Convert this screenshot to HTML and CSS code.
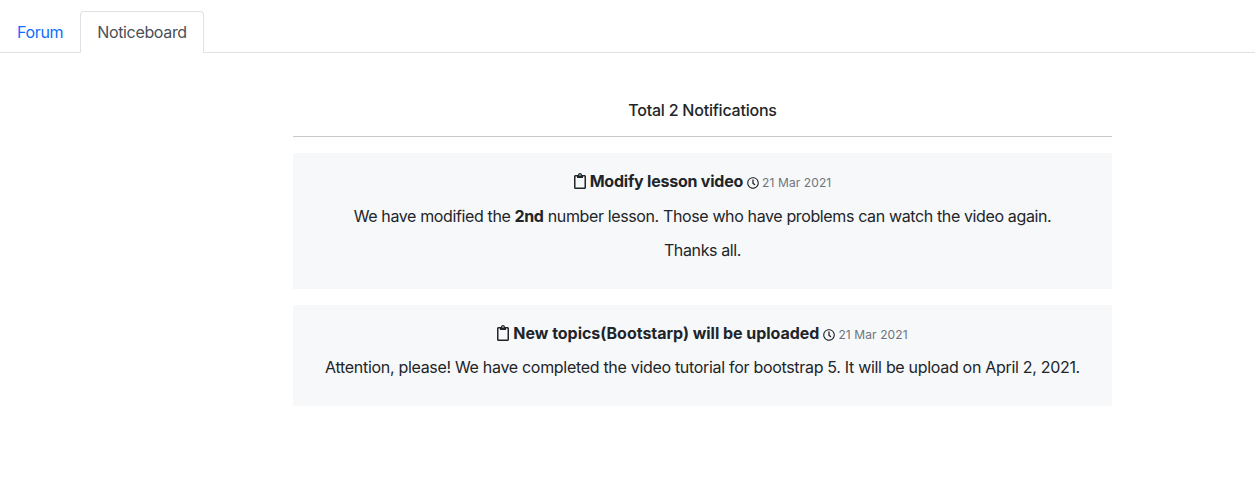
FILE: index.html
```html
<!DOCTYPE html>
<html lang="en">
<head>
<meta charset="utf-8">
<title>Noticeboard</title>
<link rel="stylesheet" href="styles.css">
</head>
<body>
<svg class="sprite" aria-hidden="true">
<symbol id="clipboard" viewBox="0 0 384 512"><path d="M336 64h-80c0-35.300-28.700-64-64-64s-64 28.700-64 64H48C21.500 64 0 85.500 0 112v352c0 26.500 21.500 48 48 48h288c26.500 0 48-21.500 48-48V112c0-26.500-21.500-48-48-48zM192 40c13.300 0 24 10.700 24 24s-10.700 24-24 24-24-10.700-24-24 10.700-24 24-24zm144 418c0 3.300-2.700 6-6 6H54c-3.300 0-6-2.700-6-6V118c0-3.300 2.700-6 6-6h42v36c0 6.600 5.400 12 12 12h168c6.600 0 12-5.400 12-12v-36h42c3.300 0 6 2.700 6 6z"/></symbol>
<symbol id="clock" viewBox="0 0 512 512"><path d="M256 8C119 8 8 119 8 256s111 248 248 248 248-111 248-248S393 8 256 8zm0 448c-110.500 0-200-89.500-200-200S145.500 56 256 56s200 89.500 200 200-89.500 200-200 200zm61.800-104.400l-84.900-61.700c-3.100-2.300-4.900-5.900-4.900-9.700V116c0-6.600 5.400-12 12-12h32c6.600 0 12 5.400 12 12v141.700l66.800 48.600c5.400 3.900 6.500 11.400 2.600 16.800L334.600 349c-3.900 5.300-11.400 6.500-16.800 2.600z"/></symbol>
</svg>
<nav class="tabs">
<a class="tab">Forum</a>
<a class="tab active">Noticeboard</a>
</nav>
<main class="board">
<h1 class="total">Total 2 Notifications</h1>
<article class="notice">
<h2 class="title"><svg class="clipboard"><use href="#clipboard"/></svg><span class="name">Modify lesson video</span><svg class="clock"><use href="#clock"/></svg><time class="date">21 Mar 2021</time></h2>
<p class="text">We have modified the <b>2nd</b> number lesson. Those who have problems can watch the video again.</p>
<p class="text">Thanks all.</p>
</article>
<article class="notice upcoming">
<h2 class="title"><svg class="clipboard"><use href="#clipboard"/></svg><span class="name">New topics(Bootstarp) will be uploaded</span><svg class="clock"><use href="#clock"/></svg><time class="date">21 Mar 2021</time></h2>
<p class="text">Attention, please! We have completed the video tutorial for bootstrap 5. It will be upload on April 2, 2021.</p>
</article>
</main>
</body>
</html>
```
FILE: styles.css
```css
* { box-sizing: border-box; }
body { margin: 0; background: #fff; color: #212529; font: 16px/24px Inter, "Liberation Sans", sans-serif; letter-spacing: -.22px; }
.sprite { display: none; }
svg { fill: #212529; flex: none; }
.tabs { display: flex; height: 53px; padding-top: 11px; border-bottom: 1px solid #dee2e6; }
.tab { height: 42px; padding: 8px 16px; border: 1px solid transparent; color: #0d6efd; letter-spacing: -.34px; }
.active { color: #495057; background: #fff; border-color: #dee2e6 #dee2e6 #fff; border-radius: 4px 4px 0 0; }
.board { width: 819px; margin: 46px 0 0 293px; text-align: center; }
.total { margin: 0 0 16px; padding-bottom: 14px; border-bottom: 1px solid #c8c9ca; font-size: 16px; font-weight: 500; line-height: 23px; }
.notice { padding: 16px 16px 17px; margin-bottom: 16px; background: #f7f8fa; }
.title { display: flex; justify-content: center; align-items: center; height: 24px; margin: 0 0 11px; font-size: 16px; }
.name { font-weight: 700; }
.clipboard { width: 12px; height: 16px; margin-right: 4px; }
.clock { width: 12px; height: 12px; margin: 3px 3px 0 4px; }
.date { margin-top: 3px; color: #6c757d; font-size: 12px; font-weight: 400; letter-spacing: .1px; }
.text { margin: 0 0 10px; white-space: nowrap; letter-spacing: -.372px; }
.upcoming .title { margin-bottom: 10px; }
.upcoming .name { letter-spacing: -.03px; }
.upcoming .text { letter-spacing: -.307px; }
```
